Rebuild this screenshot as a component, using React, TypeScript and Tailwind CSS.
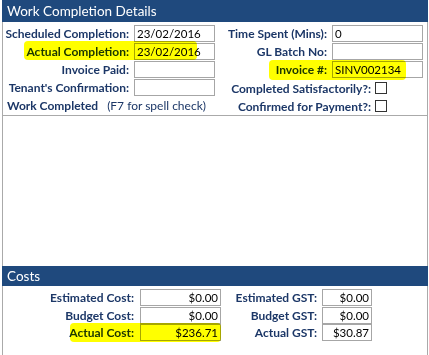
const font = "font-['Lato',sans-serif]";

function Box({ value, w, right }: { value?: string; w: string; right?: boolean }) {
  return (
    <div
      className={`${w} shrink-0 h-[17px] border border-[#a6a6a6] bg-white text-[11.5px] leading-[15px] text-black ${
        right ? 'text-right pr-[2px]' : 'pl-[2px]'
      }`}
    >
      {value}
    </div>
  );
}

function Label({ children, w }: { children: string; w?: string }) {
  return (
    <span className={`${w ?? ''} shrink-0 text-right text-[12px] font-bold text-[#1c3767] leading-[17px] whitespace-nowrap`}>
      {children}
    </span>
  );
}

function Check() {
  return <div className="w-[12px] h-[12px] shrink-0 border border-[#333] bg-white" />;
}

export default function App() {
  const left = [
    { label: 'Scheduled Completion:', value: '23/02/2016' },
    { label: 'Actual Completion:', value: '23/02/2016' },
    { label: 'Invoice Paid:', value: '' },
    { label: "Tenant's Confirmation:", value: '' },
  ];
  const right = [
    { label: 'Time Spent (Mins):', value: '0' },
    { label: 'GL Batch No:', value: '' },
    { label: 'Invoice #:', value: 'SINV002134' },
  ];
  const costs = [
    { label: 'Estimated Cost:', value: '$0.00', gst: 'Estimated GST:', gstValue: '$0.00' },
    { label: 'Budget Cost:', value: '$0.00', gst: 'Budget GST:', gstValue: '$0.00' },
    { label: 'Actual Cost:', value: '$236.71', gst: 'Actual GST:', gstValue: '$30.87' },
  ];

  return (
    <div className={`relative w-[429px] h-[355px] overflow-hidden bg-white ${font}`}>
      <div className="ml-[2px] w-[426px]">
        <div className="h-[22px] bg-[#1f497d] pl-[5px] text-[13.5px] leading-[22px] text-white">Work Completion Details</div>

        <div className="border-x border-[#aaaaaa]">
          <div className="flex h-[94px] border-b border-[#aaaaaa] pt-[3px]">
            <div className="w-[212px] shrink-0 flex flex-col">
              {left.map((r) => (
                <div key={r.label} className="h-[18px] flex items-start justify-end gap-[5px]">
                  <Label>{r.label}</Label>
                  <Box value={r.value} w="w-[81px]" />
                </div>
              ))}
              <div className="h-[18px] flex items-start pl-[4px] text-[12px] leading-[17px] text-[#1c3767] whitespace-nowrap">
                <span className="font-bold">Work Completed</span>
                <span className="ml-[9px]">(F7 for spell check)</span>
              </div>
            </div>
            <div className="flex-1 flex flex-col pr-[4px]">
              {right.map((r) => (
                <div key={r.label} className="h-[18px] flex items-start justify-end gap-[5px]">
                  <Label>{r.label}</Label>
                  <Box value={r.value} w="w-[91px]" />
                </div>
              ))}
              <div className="h-[18px] flex items-center justify-end gap-[4px] pr-[36px]">
                <Label>Completed Satisfactorily?:</Label>
                <Check />
              </div>
              <div className="h-[18px] flex items-center justify-end gap-[4px] pr-[36px]">
                <Label>Confirmed for Payment?:</Label>
                <Check />
              </div>
            </div>
          </div>
          <div className="h-[150px]" />
        </div>

        <div className="h-[20px] bg-[#1f497d] pl-[5px] text-[13.5px] leading-[20px] text-white">Costs</div>

        <div className="h-[69px] border-x border-[#aaaaaa] pt-[3px]">
          {costs.map((c) => (
            <div key={c.label} className="h-[17.5px] flex items-start">
              <Label w="w-[131px]">{c.label}</Label>
              <div className="ml-[6px]">
                <Box value={c.value} w="w-[81px]" right />
              </div>
              <Label w="w-[96px]">{c.gst}</Label>
              <div className="ml-[5px]">
                <Box value={c.gstValue} w="w-[50px]" right />
              </div>
            </div>
          ))}
        </div>
      </div>

      {/* marker highlights */}
      <div className="absolute left-[24px] top-[41px] w-[173px] h-[19px] rounded-[4px] bg-[#ffff00] mix-blend-multiply" />
      <div className="absolute left-[269px] top-[60px] w-[137px] h-[20px] rounded-[4px] bg-[#ffff00] mix-blend-multiply" />
      <div className="absolute left-[70px] top-[323px] w-[151px] h-[19px] rounded-[4px] bg-[#ffff00] mix-blend-multiply" />
    </div>
  );
}
